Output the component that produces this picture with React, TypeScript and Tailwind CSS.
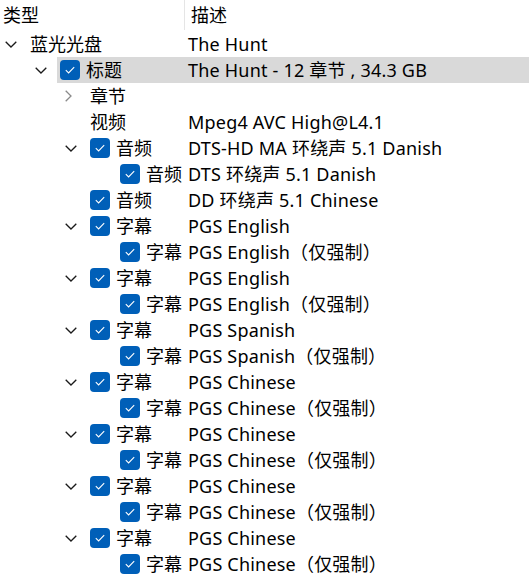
import React from "react";

type Node = {
  level: number;
  label: string;
  desc?: string;
  expand?: "open" | "closed";
  checked?: boolean;
  selected?: boolean;
};

const sub = (desc: string): Node[] => [
  { level: 3, label: "字幕", desc, expand: "open", checked: true },
  { level: 4, label: "字幕", desc: desc + "（仅强制）", checked: true },
];

const rows: Node[] = [
  { level: 1, label: "蓝光光盘", desc: "The Hunt", expand: "open" },
  { level: 2, label: "标题", desc: "The Hunt - 12 章节 , 34.3 GB", expand: "open", checked: true, selected: true },
  { level: 3, label: "章节", expand: "closed" },
  { level: 3, label: "视频", desc: "Mpeg4 AVC High@L4.1" },
  { level: 3, label: "音频", desc: "DTS-HD MA 环绕声 5.1 Danish", expand: "open", checked: true },
  { level: 4, label: "音频", desc: "DTS 环绕声 5.1 Danish", checked: true },
  { level: 3, label: "音频", desc: "DD 环绕声 5.1 Chinese", checked: true },
  ...sub("PGS English"),
  ...sub("PGS English"),
  ...sub("PGS Spanish"),
  ...sub("PGS Chinese"),
  ...sub("PGS Chinese"),
  ...sub("PGS Chinese"),
  ...sub("PGS Chinese"),
];

const indent: Record<number, string> = {
  1: "pl-0",
  2: "pl-[30px]",
  3: "pl-[60px]",
  4: "pl-[90px]",
};

function Chevron({ open }: { open: boolean }) {
  if (open) {
    return (
      <svg width="12" height="7" viewBox="0 0 12 7" fill="none" aria-hidden="true">
        <path d="M0.7 0.7 L6 6 L11.3 0.7" stroke="#1a1a1a" strokeWidth="1.3" />
      </svg>
    );
  }
  return (
    <svg width="7" height="12" viewBox="0 0 7 12" fill="none" aria-hidden="true">
      <path d="M0.7 0.7 L6 6 L0.7 11.3" stroke="#8a8a8a" strokeWidth="1.3" />
    </svg>
  );
}

function Check() {
  return (
    <span className="flex h-5 w-5 shrink-0 items-center justify-center rounded-[4px] bg-[#005fb8]">
      <svg width="10" height="8" viewBox="0 0 10 8" fill="none" aria-hidden="true">
        <path d="M0.8 4.2 L3.6 6.9 L9.2 1.1" stroke="#ffffff" strokeWidth="1.1" />
      </svg>
    </span>
  );
}

function TreeRow({ node }: { node: Node }) {
  return (
    <div className="flex h-[26px] items-center">
      <div className={`flex h-full w-[188px] shrink-0 items-center ${indent[node.level]}`}>
        {node.level === 4 ? (
          <span className="w-[30px] shrink-0" />
        ) : (
          <span className="flex w-[30px] shrink-0 items-center justify-start pl-[5px]">
            {node.expand && <Chevron open={node.expand === "open"} />}
          </span>
        )}
        <div
          className={`flex h-full flex-1 items-center gap-[6px] ${
            node.selected ? "-ml-[3px] pl-[3px] bg-[#d9d9d9]" : ""
          }`}
        >
          {node.checked && <Check />}
          <span className="whitespace-nowrap">{node.label}</span>
        </div>
      </div>
      <div
        className={`flex h-full flex-1 items-center whitespace-nowrap tracking-[0.2px] ${
          node.selected ? "bg-[#d9d9d9]" : ""
        }`}
      >
        {node.desc}
      </div>
    </div>
  );
}

export default function App() {
  return (
    <div
      className="h-[579px] w-[529px] overflow-hidden bg-white text-[18px] text-black"
      style={{ fontFamily: '"Noto Sans", "Noto Sans CJK SC", sans-serif' }}
    >
      <div className="flex h-[31px] items-start">
        <div className="flex h-[30px] w-[185px] items-center border-r border-[#e5e5e5] pl-[3px]">类型</div>
        <div className="flex h-[30px] items-center pl-[6px]">描述</div>
      </div>
      {rows.map((n, i) => (
        <TreeRow key={i} node={n} />
      ))}
    </div>
  );
}
